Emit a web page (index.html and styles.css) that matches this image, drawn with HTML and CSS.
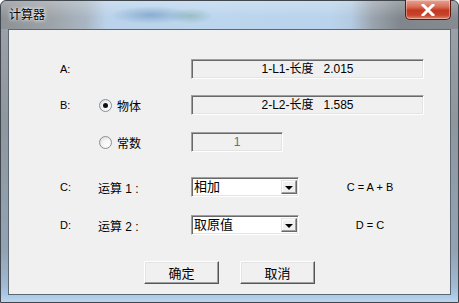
FILE: index.html
```html
<!DOCTYPE html>
<html lang="zh-CN">
<head>
  <meta charset="UTF-8">
  <title>计算器</title>
  <link rel="stylesheet" href="styles.css">
</head>
<body>

<div class="window">
  <div class="titlebar">
    <span class="title">计算器</span>
    <div class="close">
      <svg width="14" height="12" viewBox="0 0 14 12">
        <path d="M2 1 L12 11 M12 1 L2 11" stroke="#fff" stroke-width="3" stroke-linecap="square"/>
      </svg>
    </div>
  </div>

  <div class="client">
    <div class="row row-a">
      <span class="lbl">A:</span>
      <span class="mid"></span>
      <span class="field wide">1-L1-长度   2.015</span>
    </div>

    <div class="row row-b">
      <span class="lbl">B:</span>
      <span class="mid"><span class="radio checked"></span>物体</span>
      <span class="field wide">2-L2-长度   1.585</span>
    </div>

    <div class="row row-k">
      <span class="lbl"></span>
      <span class="mid"><span class="radio"></span>常数</span>
      <span class="field short disabled">1</span>
    </div>

    <div class="row row-c">
      <span class="lbl">C:</span>
      <span class="mid">运算 1 :</span>
      <span class="combo">相加<span class="drop"></span></span>
      <span class="expr">C = A + B</span>
    </div>

    <div class="row row-d">
      <span class="lbl">D:</span>
      <span class="mid">运算 2 :</span>
      <span class="combo">取原值<span class="drop"></span></span>
      <span class="expr">D = C</span>
    </div>

    <div class="buttons">
      <button class="btn">确定</button>
      <button class="btn">取消</button>
    </div>
  </div>
</div>

</body>
</html>
```

FILE: styles.css
```css
body {
  margin: 0;
  background: #fff;
  font-family: "Liberation Sans", "Noto Sans CJK SC", sans-serif;
  font-size: 12px;
}

.window {
  box-sizing: border-box;
  width: 459px;
  height: 303px;
  padding: 0 7px 7px 7px;
  border: 1px solid #3f464e;
  border-radius: 6px 6px 0 0;
  background:
    linear-gradient(to bottom, rgba(0,0,0,0) 0, rgba(0,0,0,0) 285px, #a8c6e4 293px, #bcd6ee 301px),
    linear-gradient(to bottom, #9ea4a9 0, #8f969c 120px, #93a3b4 250px, #a9c4e0 300px);
  display: flex;
  flex-direction: column;
}

/* titelbalk */
.titlebar {
  height: 28px;
  margin: 0 -7px;
  padding: 0 7px 0 7px;
  display: flex;
  justify-content: space-between;
  align-items: flex-start;
  background:
    radial-gradient(ellipse 40px 9px at 150px 14px, rgba(95,140,185,0.55), rgba(95,140,185,0)),
    radial-gradient(ellipse 22px 8px at 190px 15px, rgba(110,160,150,0.45), rgba(110,160,150,0)),
    linear-gradient(to bottom, rgba(255,255,255,0.25), rgba(255,255,255,0) 60%),
    linear-gradient(to right, #8c9196 0, #9da3a8 50px, #a9b6c2 85px, #bad2ea 105px, #bcd6ee 200px, #b9d3ec 330px, #b4cbe2 350px, #9aa3ac 372px, #80868c 400px, #868b90 459px);
  border-radius: 6px 6px 0 0;
}
.title {
  margin-top: 7px;
  margin-left: 1px;
  line-height: 14px;
  color: #000;
  text-shadow: 0 0 5px #fff, 0 0 3px #fff;
}
.close {
  width: 44px;
  height: 19px;
  margin-top: -1px;
  margin-right: 0;
  border: 1px solid #5a1a12;
  border-top: none;
  border-radius: 0 0 5px 5px;
  background: linear-gradient(to bottom, #e8a493 0, #d9705a 35%, #c4381f 55%, #c7452e 80%, #de8a6c 100%);
  box-shadow: inset 0 0 0 1px rgba(255,255,255,0.35);
  display: flex;
  align-items: center;
  justify-content: center;
}
.close svg { margin-top: 1px; }

/* werkgebied */
.client {
  height: 266px;
  box-sizing: border-box;
  border: 1px solid #5b6874;
  background: #f0f0f0;
  padding: 29px 0 0 51px;
}

.row {
  display: flex;
  align-items: center;
  height: 20px;
}
.row-b { margin-top: 16px; }
.row-k { margin-top: 17px; }
.row-c { margin-top: 25px; }
.row-d { margin-top: 18px; }

.lbl {
  width: 38px;
  font-size: 11px;
  color: #000;
}
.mid {
  width: 93px;
  display: flex;
  align-items: center;
}

.radio {
  box-sizing: border-box;
  width: 13px;
  height: 13px;
  margin-left: 1px;
  margin-right: 5px;
  border-radius: 50%;
  border: 1px solid #8c8f94;
  background: radial-gradient(circle at 65% 65%, #fff 0, #f4f4f4 45%, #d0d3d6 100%);
  display: flex;
  align-items: center;
  justify-content: center;
}
.radio.checked::after {
  content: "";
  width: 5px;
  height: 5px;
  border-radius: 50%;
  background: #111;
}

.field {
  box-sizing: border-box;
  height: 20px;
  border: 1px solid;
  border-color: #a0a0a0 #fff #fff #a0a0a0;
  box-shadow: inset 1px 1px #696969, inset -1px -1px #e3e3e3;
  background: #f0f0f0;
  text-align: center;
  line-height: 18px;
  white-space: pre;
}
.wide { width: 233px; }
.short { width: 92px; }
.disabled { color: #6d6d6d; }

.combo {
  box-sizing: border-box;
  width: 108px;
  height: 20px;
  border: 1px solid;
  border-color: #a0a0a0 #fff #fff #a0a0a0;
  box-shadow: inset 1px 1px #696969, inset -1px -1px #e3e3e3;
  background: #fff;
  font-size: 13px;
  line-height: 18px;
  padding: 0 2px 0 2px;
  display: flex;
  justify-content: space-between;
  align-items: center;
}
.drop {
  box-sizing: border-box;
  width: 16px;
  height: 14px;
  margin-right: -1px;
  border: 1px solid;
  border-color: #e3e3e3 #696969 #696969 #e3e3e3;
  box-shadow: inset -1px -1px #a0a0a0, inset 1px 1px #fff;
  background: #f0f0f0;
  display: flex;
  align-items: center;
  justify-content: center;
}
.drop::after {
  content: "";
  border-left: 4px solid transparent;
  border-right: 4px solid transparent;
  border-top: 4px solid #000;
  margin-top: 1px;
}

.expr {
  width: 142px;
  text-align: center;
  font-size: 11px;
}

.buttons {
  margin-top: 26px;
  margin-left: -51px;
  display: flex;
  justify-content: center;
  gap: 21px;
}
.btn {
  box-sizing: border-box;
  width: 75px;
  height: 23px;
  padding: 0;
  border: 1px solid;
  border-color: #fff #555 #555 #fff;
  box-shadow: inset -1px -1px #a0a0a0, inset 1px 1px #e3e3e3;
  background: #f0f0f0;
  font-family: "Liberation Sans", "Noto Sans CJK SC", sans-serif;
  font-size: 13px;
  color: #000;
}
```
